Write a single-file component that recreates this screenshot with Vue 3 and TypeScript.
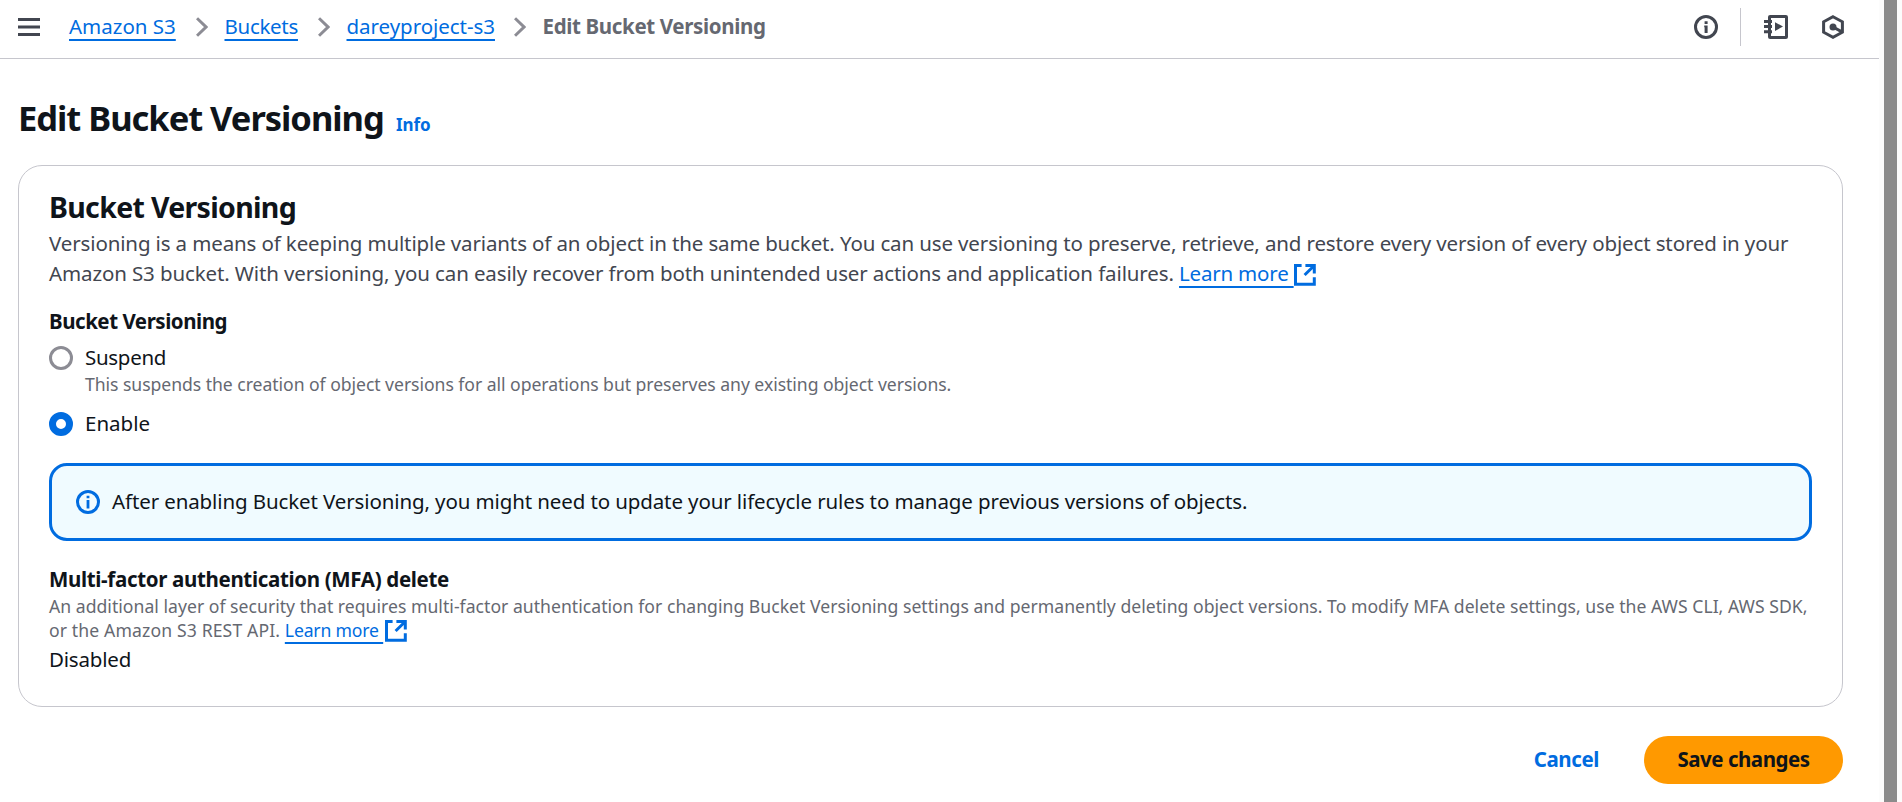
<script setup lang="ts">
import { ref } from 'vue'

interface Crumb { text: string; cls: string }

const crumbs: Crumb[] = [
  { text: 'Amazon S3', cls: 'c-service' },
  { text: 'Buckets', cls: 'c-buckets' },
  { text: 'dareyproject-s3', cls: 'c-name' },
]
const versioning = ref<'suspend' | 'enable'>('enable')
</script>

<template>
  <div class="window">
    <div class="page">
      <header class="topbar">
        <svg class="menu" width="22" height="18" viewBox="0 0 22 18"><path d="M0 1.5h22M0 9h22M0 16.5h22" /></svg>
        <nav class="crumbs">
          <template v-for="c in crumbs" :key="c.text">
            <span class="crumb-slot" :class="c.cls"><a class="link">{{ c.text }}</a></span>
            <svg class="chevron" width="12" height="20" viewBox="0 0 12 20"><path d="M1 1.2L10 10L1 18.8" /></svg>
          </template>
          <span class="current">Edit Bucket Versioning</span>
        </nav>
        <div class="tools">
          <svg class="tool" width="24" height="24" viewBox="0 0 24 24">
            <circle cx="12" cy="12" r="10.5" />
            <path class="solid" d="M10.6 6.2h3v2.8h-3zM10.2 10.5h3.4v7.4h-3v-5.6h-.4z" />
          </svg>
          <span class="divider"></span>
          <svg class="tool notebook" width="24" height="24" viewBox="0 0 24 24">
            <rect x="5.5" y="1.5" width="17" height="21" rx="0.6" />
            <path d="M0 6.5h8M0 11.6h8M0 16.7h8" />
            <path class="solid" d="M11 7.2l8 4.4-8 4.4z" />
          </svg>
          <svg class="tool hexagon" width="24" height="24" viewBox="0 0 24 24">
            <path d="M12 1.7l9.4 5.1v10.4L12 22.3 2.6 17.2V6.8z" />
            <circle class="solid" cx="12" cy="12" r="3.5" />
            <path d="M12 12l9 4.9" />
          </svg>
        </div>
      </header>

      <main class="content">
        <div class="title-row">
          <h1>Edit Bucket Versioning</h1>
          <a class="info">Info</a>
        </div>

        <section class="card">
          <h2>Bucket Versioning</h2>
          <p class="lead">
            <span class="line lead-1">Versioning is a means of keeping multiple variants of an object in the same bucket. You can use versioning to preserve, retrieve, and restore every version of every object stored in your</span>
            <span class="line lead-2">Amazon S3 bucket. With versioning, you can easily recover from both unintended user actions and application failures. <a class="link learn">Learn more&nbsp;</a><svg class="external" width="22" height="22" viewBox="0 0 22 22"><path d="M7.6 1.5H1.5V20.3H20.3V13.2M11.4 1.5H20.3V9.4M20.3 1.5L10.6 11" /></svg></span>
          </p>

          <div class="field-label">Bucket Versioning</div>
          <div class="option">
            <span class="radio" :class="{ on: versioning === 'suspend' }"></span>
            <div>
              <div class="option-name suspend">Suspend</div>
              <div class="option-hint">This suspends the creation of object versions for all operations but preserves any existing object versions.</div>
            </div>
          </div>
          <div class="option second">
            <span class="radio" :class="{ on: versioning === 'enable' }"></span>
            <div class="option-name">Enable</div>
          </div>

          <div class="alert">
            <svg class="alert-icon" width="24" height="24" viewBox="0 0 24 24">
              <circle cx="12" cy="12" r="10.5" />
              <path class="solid" d="M10.6 5.7h2.8v2.6h-2.8zM10.6 10h2.8v8.6h-2.8z" />
            </svg>
            <span class="alert-text">After enabling Bucket Versioning, you might need to update your lifecycle rules to manage previous versions of objects.</span>
          </div>

          <div class="field-label mfa">Multi-factor authentication (MFA) delete</div>
          <div class="hint">
            <span class="line hint-1">An additional layer of security that requires multi-factor authentication for changing Bucket Versioning settings and permanently deleting object versions. To modify MFA delete settings, use the AWS CLI, AWS SDK,</span>
            <span class="line hint-2">or the Amazon S3 REST API. <a class="link learn-small">Learn more&nbsp;</a><svg class="external" width="22" height="22" viewBox="0 0 22 22"><path d="M7.6 1.5H1.5V20.3H20.3V13.2M11.4 1.5H20.3V9.4M20.3 1.5L10.6 11" /></svg></span>
          </div>
          <div class="value">Disabled</div>
        </section>

        <div class="actions">
          <button class="cancel" type="button">Cancel</button>
          <button class="save" type="button">Save changes</button>
        </div>
      </main>
    </div>
    <div class="scrollbar"><div class="thumb"></div></div>
  </div>
</template>

<style>
body { margin: 0; overflow: hidden; background: #fff; }
</style>

<style scoped>
.window {
  display: flex;
  width: 1902px;
  height: 802px;
  overflow: hidden;
  background: #fff;
  color: #0f141a;
  font: 400 20.5px/30px "Noto Sans", "Open Sans", sans-serif;
  white-space: nowrap;
}
.window * { box-sizing: border-box; }
.window svg { display: block; flex: none; fill: none; }
.page { width: 1879px; height: 802px; }
.scrollbar { width: 23px; padding-left: 5px; background: #fcfcfc; }
.thumb { width: 13px; height: 802px; background: #8b8b8b; }

.topbar {
  display: flex;
  align-items: center;
  height: 59px;
  padding: 0 34px 4px 18px;
  border-bottom: 1px solid #c6c6cd;
}
.menu { stroke: #424650; stroke-width: 2.8; }
.crumbs { display: flex; align-items: center; padding-bottom: 2px; margin-left: 29px; }
.crumb-slot { display: block; }
.c-service { width: 107.5px; }
.c-buckets { width: 74px; letter-spacing: -0.3px; }
.c-name { width: 148px; letter-spacing: -0.04px; }
.chevron { width: 12px; margin: 2px 17px 0 19px; stroke: #8c8c94; stroke-width: 3; }
.current { color: #656871; font-weight: 700; letter-spacing: -0.35px; }
.link {
  color: #006ce0;
  text-decoration: underline;
  text-decoration-thickness: 2px;
  text-underline-offset: 5px;
  text-decoration-skip-ink: none;
}
.tools { display: flex; align-items: center; margin-left: auto; }
.tool { stroke: #424650; stroke-width: 3; }
.tool .solid { fill: #424650; stroke: none; }
.divider { width: 1px; height: 38px; margin: 0 23px 0 22px; background: #c6c6cd; }
.hexagon { margin-left: 33px; }

.content { padding: 36px 36px 0 18px; }
.title-row { display: flex; align-items: baseline; height: 45px; }
h1 { margin: 0; width: 366px; font-size: 34.5px; line-height: 45px; font-weight: 700; letter-spacing: -1.03px; }
.info { margin-left: 12px; color: #006ce0; font-size: 17px; font-weight: 700; letter-spacing: -0.1px; }

.card {
  height: 542px;
  margin-top: 25px;
  padding: 23px 30px 0;
  border: 1px solid #c6c6cd;
  border-radius: 24px;
}
h2 { margin: 0; font-size: 28.5px; line-height: 36px; font-weight: 700; letter-spacing: -0.68px; }
.lead { margin: 3px 0 0; color: #424650; }
.line { display: flex; white-space: pre; }
.lead-1 { letter-spacing: -0.13px; }
.lead-2 { letter-spacing: -0.117px; }
.learn { letter-spacing: -0.2px; }
.external { stroke: #006ce0; stroke-width: 3; }
.lead .external { margin-top: 6px; }
.field-label { margin-top: 18px; font-weight: 700; letter-spacing: -0.47px; }
.option { display: flex; margin-top: 6px; }
.option.second { margin-top: 12px; }
.radio {
  flex: none;
  width: 24px;
  height: 24px;
  margin: 4px 12px 0 0;
  border: 3px solid #8c8c94;
  border-radius: 50%;
  background: #fff;
}
.radio.on { border: 7px solid #006ce0; }
.suspend { letter-spacing: -0.3px; }
.option-hint { color: #656871; font-size: 17.6px; line-height: 24px; letter-spacing: -0.045px; }
.alert {
  display: flex;
  align-items: center;
  height: 78px;
  margin-top: 25px;
  padding: 0 24px;
  border: 3px solid #006ce0;
  border-radius: 18px;
  background: #f0fbff;
  letter-spacing: -0.115px;
}
.alert-text { padding-bottom: 2px; }
.alert-icon { margin-right: 12px; stroke: #006ce0; stroke-width: 3; }
.alert-icon .solid { fill: #006ce0; stroke: none; }
.mfa { margin-top: 23px; letter-spacing: -0.335px; }
.hint { color: #656871; font-size: 17.6px; line-height: 24px; }
.hint-1 { letter-spacing: 0.025px; }
.hint-2 { letter-spacing: 0.13px; }
.learn-small { letter-spacing: -0.17px; }
.hint .external { margin: 2px 0 0 2px; }
.value { margin-top: 2px; letter-spacing: -0.2px; }

.actions { display: flex; justify-content: flex-end; align-items: center; margin-top: 29px; }
button {
  height: 48px;
  padding: 0 0 2px;
  border: 0;
  border-radius: 24px;
  background: transparent;
  font: inherit;
  font-weight: 700;
}
.cancel { margin-right: 45px; color: #006ce0; letter-spacing: -0.4px; }
.save { width: 199px; background: #ff9900; color: #0f141a; letter-spacing: -0.48px; }
</style>
